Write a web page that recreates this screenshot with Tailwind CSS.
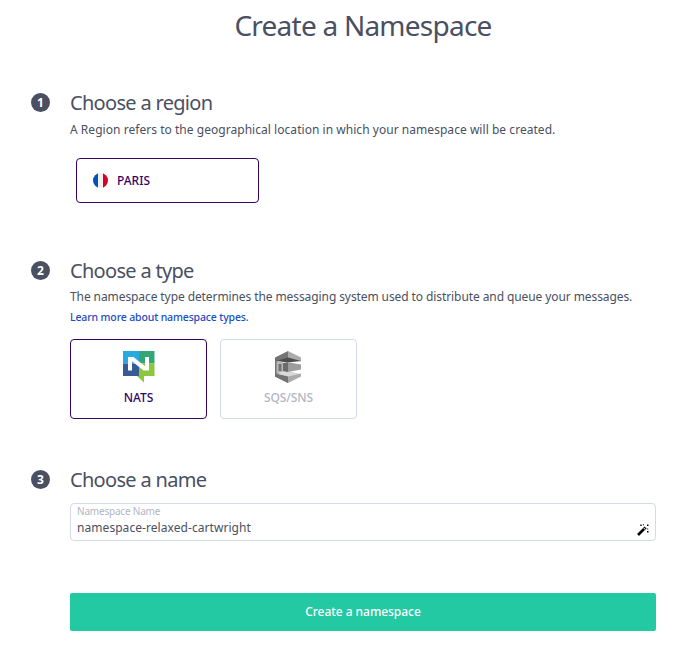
<!DOCTYPE html>
<html lang="en">
<head>
<meta charset="utf-8">
<title>Create a Namespace</title>
<script src="https://cdn.jsdelivr.net/npm/@tailwindcss/browser@4"></script>
</head>
<body class="h-[649px] w-[693px] overflow-hidden bg-white font-['Noto_Sans',sans-serif] text-[#4a4f62]">
<main class="flex flex-col pt-[5px] pl-[31px] pr-[37px]">
  <h1 class="ml-[39px] h-10 text-center text-[28px] leading-10 whitespace-nowrap"><span class="tracking-[-0.76px]">Create a Namespace</span></h1>

  <section class="mt-[44px] flex h-[168px] items-start gap-5">
    <span class="mt-1 flex size-[19px] shrink-0 items-center justify-center rounded-full bg-[#4a4f62] text-xs leading-none font-bold text-white">1</span>
    <div class="flex-1 whitespace-nowrap">
      <h2 class="h-7 text-[20px] leading-7"><span class="tracking-[-0.69px]">Choose a region</span></h2>
      <p class="mt-[3px] h-5 text-[12px] leading-5"><span class="tracking-[0.04px]">A Region refers to the geographical location in which your namespace will be created.</span></p>
      <button class="mt-[18px] ml-[6px] flex h-[45px] w-[183px] items-center gap-[9px] rounded-[4px] border border-[#350368] pl-4 text-[12px] font-medium text-[#350368]">
        <svg class="size-[15px]" viewBox="0 0 15 15"><defs><clipPath id="disc"><circle cx="7.5" cy="7.5" r="7.5"/></clipPath></defs><g clip-path="url(#disc)"><path fill="#f0f0f0" d="M0 0h15v15H0z"/><path fill="#0052b4" d="M0 0h5v15H0z"/><path fill="#d80027" d="M10 0h5v15h-5z"/></g></svg>
        <span>PARIS</span>
      </button>
    </div>
  </section>

  <section class="flex h-[209px] items-start gap-5">
    <span class="mt-1 flex size-[19px] shrink-0 items-center justify-center rounded-full bg-[#4a4f62] text-xs leading-none font-bold text-white">2</span>
    <div class="flex-1 whitespace-nowrap">
      <h2 class="h-7 text-[20px] leading-7"><span class="tracking-[-0.69px]">Choose a type</span></h2>
      <p class="mt-[2px] h-5 text-[12px] leading-5"><span class="tracking-[-0.09px]">The namespace type determines the messaging system used to distribute and queue your messages.</span></p>
      <a class="block h-5 text-[10.5px] leading-5 font-medium text-[#1b4cc4]"><span class="tracking-[-0.14px]">Learn more about namespace types.</span></a>
      <div class="mt-[12px] flex gap-[13px]">
        <button class="flex h-20 w-[137px] flex-col items-center rounded-[4px] border border-[#350368] pt-[11px] text-[12px] font-medium text-[#350368]">
          <svg class="h-8 w-8" viewBox="0 0 32 32"><path fill="#27aae1" d="M0 0h16v12.500H0z"/><path fill="#34a574" d="M16 0h15.500v12.500H16z"/><path fill="#375c93" d="M0 12.500h16V25H0z"/><path fill="#8dc63f" d="M16 12.500h15.500V25H21v6.500L14 25h2z"/><path fill="#fff" d="M5 19.500V6h5.500l11.500 9.200V6h4v13.500h-5.500L9 10.300v9.200z"/></svg>
          <span class="mt-[5px] leading-5">NATS</span>
        </button>
        <button class="flex h-20 w-[137px] flex-col items-center rounded-[4px] border border-[#d4dae7] pt-[11px] text-[12px] font-medium text-[#b1b5c5]">
          <svg class="h-8 w-8" viewBox="0 0 32 32"><path fill="#737373" d="M2 6.500 15 0v8L5 10v12l10 2v8L2 25.500z"/><path fill="#ababab" d="M15 0 28 6.500v4L15 8z"/><path fill="#4d4d4d" d="M3 10 15 6.500l13 3.500-13 1.500z"/><path fill="#d9d9d9" d="m3 23 12-3 13 3-13 3z"/><path fill="#737373" d="m2 22.500 13 3V32L2 25.500z"/><path fill="#ababab" d="m15 25.500 13-3v3L15 32z"/><path fill="#b8b8b8" d="M3.500 10.300 10 11v10l-6.500 1.500z"/><path fill="#737373" d="M5.500 13h3v7h-3z"/><path fill="#6b6b6b" d="m10 12 5-.8v9.800l-5-.8z"/><path fill="#9d9d9d" d="m15 11.200 13 2.300v5L15 21z"/></svg>
          <span class="mt-[5px] tracking-[-0.1px] leading-5">SQS/SNS</span>
        </button>
      </div>
    </div>
  </section>

  <section class="flex h-[127px] items-start gap-5">
    <span class="mt-1 flex size-[19px] shrink-0 items-center justify-center rounded-full bg-[#4a4f62] text-xs leading-none font-bold text-white">3</span>
    <div class="flex-1 whitespace-nowrap">
      <h2 class="h-7 text-[20px] leading-7"><span class="tracking-[-0.69px]">Choose a name</span></h2>
      <div class="mt-[9px] flex h-[38px] items-end justify-between rounded-[4px] border border-[#d4dae7] pr-[6px] pl-[6px]">
        <div class="flex h-full flex-col">
          <label class="h-4 text-[10px] leading-[15px] text-[#b1b5c5]"><span class="tracking-[-0.2px]">Namespace Name</span></label>
          <span class="text-[12px] leading-4"><span class="tracking-[0.06px]">namespace-relaxed-cartwright</span></span>
        </div>
        <svg class="mb-1 size-3" viewBox="0 0 12 12"><path stroke="#000" stroke-width="2.600" d="m1 11 6-6"/><path stroke="#000" stroke-width="2.600" d="m7 5 1.700-1.700"/><path stroke="#fff" stroke-width="1" d="M7.200 4.800 8.300 3.700"/><path fill="#000" d="M3.300.5h1.400v1.400H3.300zM6 .3h1v1H6zM10 .5h1.500V2H10zM10.200 4.500h1v1h-1zM10 7h1.500v1.500H10z"/></svg>
      </div>
    </div>
  </section>

  <button class="ml-[39px] h-[38px] rounded-[2px] bg-[#23c9a2] text-[12px] font-medium text-white"><span class="tracking-[-0.05px]">Create a namespace</span></button>
</main>
</body>
</html>
